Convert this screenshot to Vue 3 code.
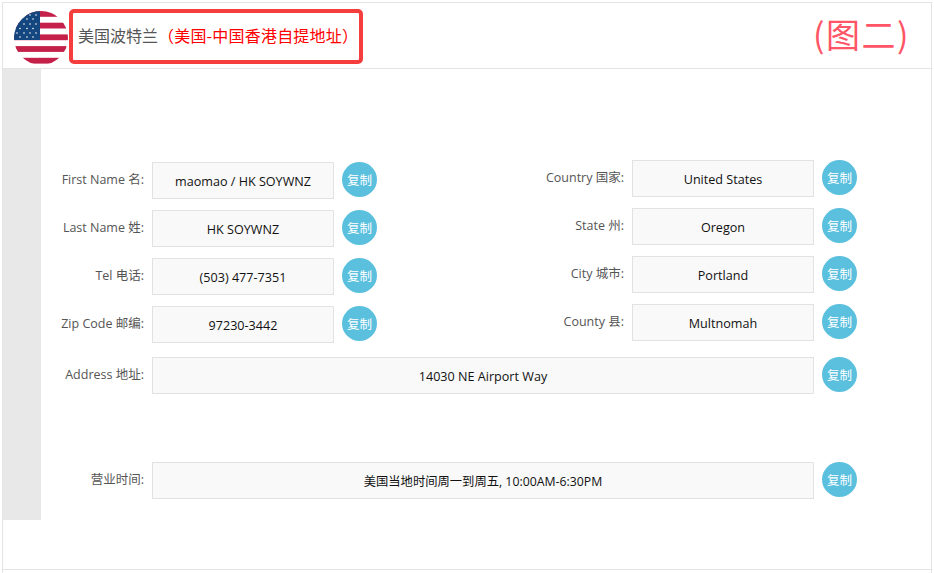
<script setup>
const left = [
  { label: 'First Name 名:', value: 'maomao / HK SOYWNZ' },
  { label: 'Last Name 姓:', value: 'HK SOYWNZ' },
  { label: 'Tel 电话:', value: '(503) 477-7351' },
  { label: 'Zip Code 邮编:', value: '97230-3442' },
]
const right = [
  { label: 'Country 国家:', value: 'United States' },
  { label: 'State 州:', value: 'Oregon' },
  { label: 'City 城市:', value: 'Portland' },
  { label: 'County 县:', value: 'Multnomah' },
]
const stripes = [11, 22.7, 34.4, 46.1, 57.8]
const stars = [
  [24,15],[30,15],[36,15],
  [20,19],[27,19],[33,19],
  [17,24],[24,24],[30,24],[36,24],
  [20,28.5],[27,28.5],[33,28.5],
  [17,33],[24,33],[30,33],[36,33],
  [20,37],[27,37],[33,37],
]
</script>

<template>
  <div class="frame">
    <header class="head">
      <svg class="flag" width="54" height="54" viewBox="14 11 54 54">
        <defs>
          <clipPath id="flagClip"><circle cx="41" cy="38" r="27" /></clipPath>
        </defs>
        <g clip-path="url(#flagClip)">
          <rect x="14" y="11" width="54" height="54" fill="#fff" />
          <rect v-for="y in stripes" :key="y" x="14" :y="y" width="54" height="5.8" fill="#c4204a" />
          <rect x="14" y="11" width="26" height="29" fill="#14477f" />
          <circle v-for="(s, i) in stars" :key="'s' + i" :cx="s[0]" :cy="s[1]" r="0.8" fill="#fff" />
        </g>
      </svg>
      <h1 class="title">美国波特兰<span class="title-red">（美国-中国香港自提地址）</span></h1>
      <span class="figure">(图二)</span>
      <span class="mark"></span>
    </header>

    <div class="body">
      <aside class="side"></aside>
      <main class="main">
        <div class="cols">
          <div class="col col-left">
            <div v-for="r in left" :key="r.label" class="row">
              <label class="lbl">{{ r.label }}</label>
              <div class="val">{{ r.value }}</div>
              <button class="copy">复制</button>
            </div>
          </div>
          <div class="col col-right">
            <div v-for="r in right" :key="r.label" class="row">
              <label class="lbl lbl-right">{{ r.label }}</label>
              <div class="val">{{ r.value }}</div>
              <button class="copy">复制</button>
            </div>
          </div>
        </div>
        <div class="row row-address">
          <label class="lbl">Address 地址:</label>
          <div class="val val-wide">14030 NE Airport Way</div>
          <button class="copy">复制</button>
        </div>
        <div class="row row-hours">
          <label class="lbl">营业时间:</label>
          <div class="val val-wide val-hours">美国当地时间周一到周五, 10:00AM-6:30PM</div>
          <button class="copy">复制</button>
        </div>
      </main>
    </div>
  </div>
</template>

<style>
html, body { margin: 0; background: #fff; }
</style>

<style scoped>
.frame {
  box-sizing: border-box;
  width: 930px;
  height: 571px;
  margin: 2px 0 0 2px;
  border: 1px solid #e4e4e4;
  border-bottom: 0;
  font-family: "Open Sans", "Noto Sans CJK SC", sans-serif;
  overflow: hidden;
}
.head {
  position: relative;
  box-sizing: border-box;
  height: 66px;
  display: flex;
  align-items: center;
  padding: 6px 21px 0 11px;
  border-bottom: 1px solid #e4e4e4;
}
.flag { flex: none; margin-top: -1px; }
.title {
  margin: -8px 0 0 10px;
  font-size: 16px;
  font-weight: 400;
  color: #555;
  font-family: "Noto Sans CJK SC", sans-serif;
}
.title-red { color: #f00; letter-spacing: 0.2px; }
.figure {
  margin-left: auto;
  margin-top: -9px;
  font-size: 34px;
  line-height: 1;
  letter-spacing: 1.5px;
  color: #ff5566;
  font-family: "Noto Sans CJK SC", sans-serif;
}
.mark {
  position: absolute;
  left: 66px;
  top: 6px;
  width: 294px;
  height: 55px;
  box-sizing: border-box;
  border: 4px solid #f53d3d;
  border-radius: 5px;
}
.body {
  display: flex;
  height: 500px;
  border-bottom: 1px solid #e4e4e4;
}
.side {
  flex: none;
  width: 38px;
  height: 451px;
  background: #e8e8e8;
}
.main {
  padding-top: 91px;
}
.cols { display: flex; }
.col { display: flex; flex-direction: column; gap: 11px; }
.col-left { margin-top: 2px; }
.col-right { margin-left: 127px; }
.row { display: flex; gap: 8px; align-items: flex-start; }
.lbl {
  box-sizing: border-box;
  width: 103px;
  flex: none;
  text-align: right;
  font-size: 12.5px;
  line-height: 35px;
  color: #555;
  white-space: nowrap;
}
.lbl-right { width: 120px; }
.val {
  box-sizing: border-box;
  width: 182px;
  height: 37px;
  flex: none;
  background: #f9f9f9;
  border: 1px solid #e2e2e2;
  text-align: center;
  font-size: 12.6px;
  line-height: 38px;
  color: #111;
}
.val-wide { width: 662px; }
.val-hours { font-size: 12.3px; }
.copy {
  flex: none;
  width: 35px;
  height: 35px;
  padding: 0;
  border: 0;
  border-radius: 50%;
  background: #5bc0de;
  color: #fff;
  font-family: "Noto Sans CJK SC", sans-serif;
  font-size: 12.5px;
}
.row-address { margin-top: 14px; }
.row-hours { margin-top: 68px; }
</style>
